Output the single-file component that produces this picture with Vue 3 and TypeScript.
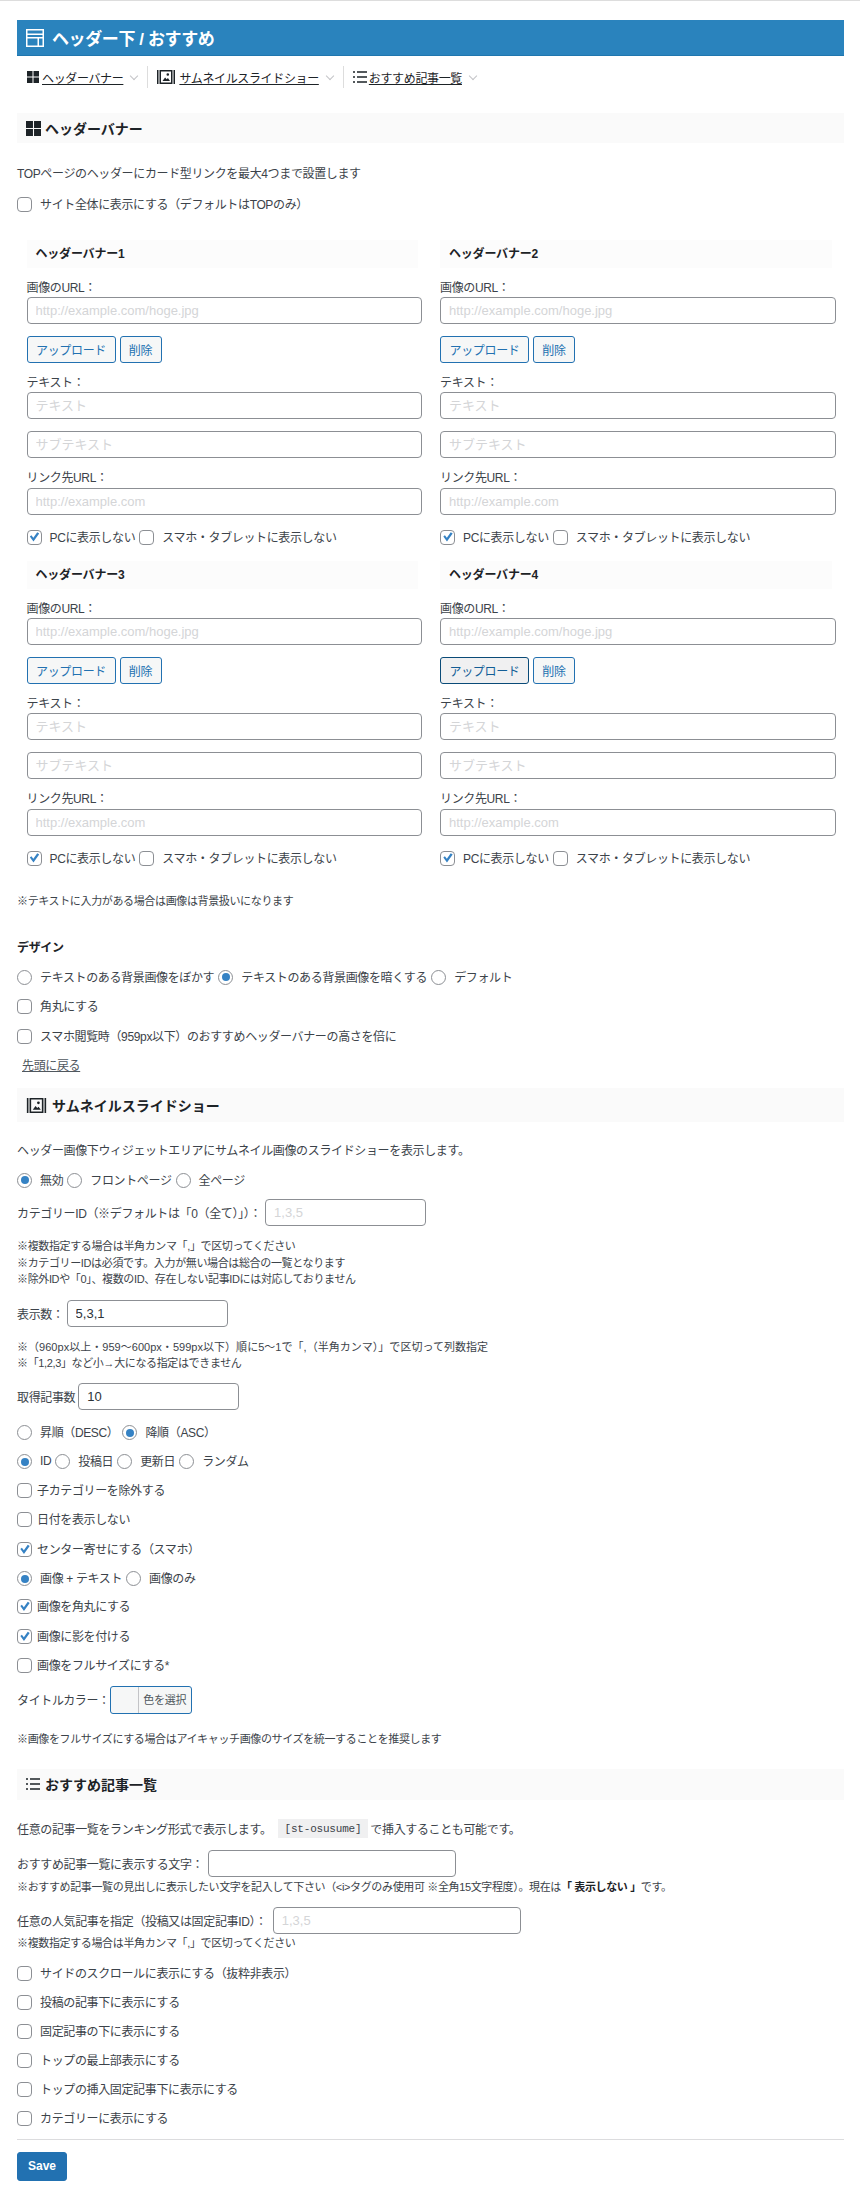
<script setup lang="ts">
interface Banner { name: string; pressed: boolean }
const banners: Banner[] = [
  { name: 'ヘッダーバナー1', pressed: false },
  { name: 'ヘッダーバナー2', pressed: false },
  { name: 'ヘッダーバナー3', pressed: false },
  { name: 'ヘッダーバナー4', pressed: true },
]
const listChecks: string[] = [
  'サイドのスクロールに表示にする（抜粋非表示）',
  '投稿の記事下に表示にする',
  '固定記事の下に表示にする',
  'トップの最上部表示にする',
  'トップの挿入固定記事下に表示にする',
  'カテゴリーに表示にする',
]
</script>

<template>
  <div class="page">
    <h1 class="title">
      <svg class="title-icon" viewBox="0 0 18 20" aria-hidden="true">
        <path fill="#fff" fill-rule="evenodd" d="M0 1h18v18H0zM1.500 2.500v3h15v-3zM1.500 7v2h15V7zM1.500 10.500v7h10v-7zM13 10.500v7h3.500v-7z" />
      </svg>
      ヘッダー下 / おすすめ
    </h1>

    <nav class="nav">
      <div class="nav-item">
        <svg class="ico" viewBox="0 0 14 14"><path fill="#1d2327" d="M1 1h5.500v5.500H1zM7.500 1H13v5.500H7.500zM1 7.500h5.500V13H1zM7.500 7.500H13V13H7.500z" /></svg>
        <a class="nav-link">ヘッダーバナー</a><span class="chev"></span>
      </div>
      <div class="nav-item sep">
        <svg class="ico wide-nav" viewBox="0 0 18 14"><path fill="#1d2327" fill-rule="evenodd" d="M0 0h1.500v14H0zM16.500 0H18v14h-1.500zM2.500 0h13v14h-13zM4 1.500v11h10v-11zM5.500 11l2.600-3.500 1.600 1.800 1.200-1.200L13 11zM10.800 3.200a1.300 1.300 0 1 1 0 2.600 1.300 1.300 0 0 1 0-2.600z" /></svg>
        <a class="nav-link">サムネイルスライドショー</a><span class="chev"></span>
      </div>
      <div class="nav-item sep">
        <svg class="ico" viewBox="0 0 14 14"><path fill="none" stroke="#1d2327" stroke-width="1.400" d="M4 2h10M4 7h10M4 12h10M0 2h2M0 7h2M0 12h2" /></svg>
        <a class="nav-link">おすすめ記事一覧</a><span class="chev"></span>
      </div>
    </nav>

    <h2 class="band m25 h30">
      <svg class="ico band-ico" viewBox="0 0 14 14"><path fill="#1d2327" d="M0 0h6.500v6.500H0zM7.500 0H14v6.500H7.500zM0 7.500h6.500V14H0zM7.500 7.500H14V14H7.500z" /></svg>
      ヘッダーバナー
    </h2>

    <p class="line m19">TOPページのヘッダーにカード型リンクを最大4つまで設置します</p>
    <label class="line m11"><input type="checkbox" class="gap8" />サイト全体に表示にする（デフォルトはTOPのみ）</label>

    <div class="grid">
      <section v-for="b in banners" :key="b.name" class="col">
        <h3 class="sub">{{ b.name }}</h3>
        <div class="label m12">画像のURL：</div>
        <input class="text wide m1" placeholder="http://example.com/hoge.jpg" />
        <div class="btns">
          <button type="button" class="btn upload" :class="{ pressed: b.pressed }">アップロード</button>
          <button type="button" class="btn remove">削除</button>
        </div>
        <div class="label m12">テキスト：</div>
        <input class="text wide m1" placeholder="テキスト" />
        <input class="text wide m12" placeholder="サブテキスト" />
        <div class="label m12">リンク先URL：</div>
        <input class="text wide m2" placeholder="http://example.com" />
        <div class="line m11">
          <input type="checkbox" class="gap8" checked />PCに表示しない<input type="checkbox" class="gap8 ml4" />スマホ・タブレットに表示しない
        </div>
      </section>
    </div>

    <p class="note m26">※テキストに入力がある場合は画像は背景扱いになります</p>
    <p class="line strong m27">デザイン</p>
    <div class="line m10">
      <input type="radio" name="d" class="gap8" />テキストのある背景画像をぼかす<input type="radio" name="d" class="gap8 ml4" checked />テキストのある背景画像を暗くする<input type="radio" name="d" class="gap8 ml4" />デフォルト
    </div>
    <label class="line m9"><input type="checkbox" class="gap8" />角丸にする</label>
    <label class="line m10"><input type="checkbox" class="gap8" />スマホ閲覧時（959px以下）のおすすめヘッダーバナーの高さを倍に</label>
    <a class="line top-link m9">先頭に戻る</a>

    <h2 class="band m14 h34">
      <svg class="ico band-ico wide-ico" viewBox="0 0 18 14"><path fill="#1d2327" fill-rule="evenodd" d="M0 0h1.500v14H0zM16.500 0H18v14h-1.500zM2.500 0h13v14h-13zM4 1.500v11h10v-11zM5.500 11l2.600-3.500 1.600 1.800 1.200-1.200L13 11zM10.800 3.200a1.300 1.300 0 1 1 0 2.600 1.300 1.300 0 0 1 0-2.600z" /></svg>
      サムネイルスライドショー
    </h2>

    <p class="line m17">ヘッダー画像下ウィジェットエリアにサムネイル画像のスライドショーを表示します。</p>
    <div class="line m10">
      <input type="radio" name="s" class="gap8" checked />無効<input type="radio" name="s" class="gap8 ml4" />フロントページ<input type="radio" name="s" class="gap8 ml4" />全ページ
    </div>
    <div class="field m10">カテゴリーID（※デフォルトは「0（全て）」）：<input class="text w160 ml4" placeholder="1,3,5" /></div>
    <p class="note m12 lh165">※複数指定する場合は半角カンマ「,」で区切ってください<br />※カテゴリーIDは必須です。入力が無い場合は総合の一覧となります<br />※除外IDや「0」、複数のID、存在しない記事IDには対応しておりません</p>
    <div class="field m12">表示数：<input class="text w160 ml3" value="5,3,1" /></div>
    <p class="note m12"><span class="loose">※（960px以上・959〜600px・599px以下）順に5〜1で「,（半角カンマ）」で区切って列数指定</span><br />※「1,2,3」など小→大になる指定はできません</p>
    <div class="field m12">取得記事数<input class="text w160 ml3" value="10" /></div>
    <div class="line m12">
      <input type="radio" name="o" class="gap8" />昇順（DESC）<input type="radio" name="o" class="gap8 ml4" checked />降順（ASC）
    </div>
    <div class="line m9">
      <input type="radio" name="k" class="gap8" checked />ID<input type="radio" name="k" class="gap8 ml4" />投稿日<input type="radio" name="k" class="gap8 ml4" />更新日<input type="radio" name="k" class="gap8 ml4" />ランダム
    </div>
    <label class="line m9"><input type="checkbox" class="gap5" />子カテゴリーを除外する</label>
    <label class="line m9"><input type="checkbox" class="gap5" />日付を表示しない</label>
    <label class="line m10"><input type="checkbox" class="gap5" checked />センター寄せにする（スマホ）</label>
    <div class="line m9">
      <input type="radio" name="m" class="gap8" checked />画像 + テキスト<input type="radio" name="m" class="gap8 ml4" />画像のみ
    </div>
    <label class="line m8"><input type="checkbox" class="gap5" checked />画像を角丸にする</label>
    <label class="line m10"><input type="checkbox" class="gap5" checked />画像に影を付ける</label>
    <label class="line m9"><input type="checkbox" class="gap5" />画像をフルサイズにする*</label>
    <div class="field m11">
      タイトルカラー：<button type="button" class="color"><span class="swatch"></span><span class="color-text">色を選択</span></button>
    </div>
    <p class="note m17">※画像をフルサイズにする場合はアイキャッチ画像のサイズを統一することを推奨します</p>

    <h2 class="band m22 h31">
      <svg class="ico band-ico list-ico" viewBox="0 0 14 14"><path fill="none" stroke="#1d2327" stroke-width="1.400" d="M4 2h10M4 7h10M4 12h10M0 2h2M0 7h2M0 12h2" /></svg>
      おすすめ記事一覧
    </h2>

    <p class="line m19">任意の記事一覧をランキング形式で表示します。<code class="code">[st-osusume]</code>で挿入することも可能です。</p>
    <div class="field m11">おすすめ記事一覧に表示する文字：<input class="text w248 ml5" /></div>
    <p class="note m2">※おすすめ記事一覧の見出しに表示したい文字を記入して下さい（&lt;i&gt;タグのみ使用可 ※全角15文字程度）。現在は<b class="em">「 表示しない 」</b>です。</p>
    <div class="field m12">任意の人気記事を指定（投稿又は固定記事ID）：<input class="text w248 ml6" placeholder="1,3,5" /></div>
    <p class="note m1">※複数指定する場合は半角カンマ「,」で区切ってください</p>

    <label v-for="(c, i) in listChecks" :key="c" class="line" :class="i === 0 ? 'm12' : 'm9'"><input type="checkbox" class="gap8" />{{ c }}</label>

    <hr class="rule" />
    <button type="button" class="save">Save</button>
  </div>
</template>

<style>
html, body { margin: 0; background: #fff; }
</style>

<style scoped>
.page {
  box-sizing: border-box;
  width: 860px;
  height: 2201px;
  border-top: 1px solid #ddd;
  padding: 0 16px 0 17px;
  font-family: "Liberation Sans", "Noto Sans CJK JP", sans-serif;
  font-size: 12px;
  letter-spacing: -0.030em;
  color: #3c434a;
}
p, h1, h2, h3 { margin: 0; }
.title {
  margin-top: 19px;
  height: 36px;
  display: flex;
  align-items: center;
  padding-left: 9px;
  background: #2a83bd;
  border-bottom: 1px solid #1f76ae;
  box-sizing: border-box;
  color: #fff;
  font-size: 17px;
  letter-spacing: -0.4px;
  font-weight: 700;
}
.title-icon { width: 18px; height: 20px; margin-right: 8px; }
.nav {
  margin-top: 10px;
  height: 22px;
  display: flex;
  align-items: center;
  padding-left: 9px;
}
.nav-item { display: flex; align-items: center; height: 22px; }
.sep { border-left: 1px solid #ddd; margin-left: 8px; padding-left: 9px; }
.ico { width: 14px; height: 14px; margin-right: 2px; flex: none; }
.wide-nav { width: 18px; margin-right: 4px; }
.nav-link { color: #1d2327; text-decoration: underline; }
.chev {
  width: 5px;
  height: 5px;
  margin: -3px 2px 0 8px;
  border-right: 1px solid #c3c4c7;
  border-bottom: 1px solid #c3c4c7;
  transform: rotate(45deg);
}
.band {
  display: flex;
  align-items: center;
  padding-left: 9px;
  background: #fafafa;
  color: #1d2327;
  font-size: 14px;
  letter-spacing: 0;
  font-weight: 700;
  box-sizing: border-box;
}
.band-ico { width: 15px; height: 15px; margin-right: 4px; }
.wide-ico { width: 21px; height: 15px; margin-right: 5px; }
.list-ico { width: 14px; height: 14px; margin-right: 5px; }
.h30 { height: 30px; }
.h31 { height: 31px; }
.h34 { height: 34px; }
.line {
  display: flex;
  align-items: center;
  min-height: 20px;
  white-space: nowrap;
}
.strong { font-weight: 700; color: #1d2327; }
.top-link { margin-left: 5px; text-decoration: underline; color: #50575e; }
.note { font-size: 11px; line-height: 16px; white-space: nowrap; }
.loose { letter-spacing: 0.030px; }
.lh165 { line-height: 16.500px; }
.grid {
  margin: 27px 0 0 9.500px;
  display: grid;
  grid-template-columns: 395.500px 395.500px;
  column-gap: 18px;
  row-gap: 15px;
}
.col { min-width: 0; }
.sub {
  height: 28px;
  line-height: 28px;
  padding-left: 9px;
  margin-right: 4px;
  background: #fcfcfc;
  color: #1d2327;
  font-size: 12px;
  letter-spacing: -0.2px;
  font-weight: 700;
}
.label { height: 16px; line-height: 16px; }
.text {
  display: block;
  box-sizing: border-box;
  height: 27px;
  padding: 0 8px;
  border: 1px solid #8c8f94;
  border-radius: 4px;
  background: #fff;
  color: #2c3338;
  font: inherit;
  font-size: 13px;
  letter-spacing: 0;
  outline: none;
}
.text::placeholder { color: #d4d5d7; opacity: 1; }
.wide { width: 100%; }
.w160 { width: 161px; flex: none; }
.w248 { width: 248px; flex: none; }
.btns { display: flex; gap: 4px; margin-top: 12px; }
.btn {
  box-sizing: border-box;
  height: 27px;
  padding: 0;
  border: 1px solid #2271b1;
  border-radius: 3px;
  background: #f6f7f7;
  color: #2271b1;
  font: inherit;
  letter-spacing: -0.030em;
}
.upload { width: 89px; }
.remove { width: 42px; }
.pressed { background: #f0f0f1; color: #135e96; border-color: #0a4b78; }
.field { display: flex; align-items: center; white-space: nowrap; min-height: 27px; }
.color {
  display: flex;
  box-sizing: border-box;
  width: 82px;
  height: 28px;
  padding: 0;
  border: 1px solid #2271b1;
  border-radius: 3px;
  background: #f6f7f7;
  color: #50575e;
  font: inherit;
  font-size: 11px;
  letter-spacing: -0.2px;
}
.swatch { width: 27px; height: 100%; border-right: 1px solid #c3c4c7; flex: none; }
.color-text { flex: 1; line-height: 26px; text-align: center; }
.code {
  margin: 0 2px 0 6px;
  padding: 4px 7px 3px;
  background: #f0f0f1;
  font-family: "Liberation Mono", monospace;
  font-size: 11px;
  letter-spacing: -0.2px;
  color: #3c434a;
}
.em { color: #1d2327; }
.rule { margin: 11px 0 0; border: 0; border-top: 1px solid #dcdcde; }
.save {
  display: block;
  margin-top: 12px;
  width: 50px;
  height: 29px;
  padding: 0;
  border: 1px solid #2271b1;
  border-radius: 3px;
  background: #2271b1;
  color: #fff;
  font: inherit;
  font-weight: 700;
  letter-spacing: 0;
}
input[type="checkbox"], input[type="radio"] {
  appearance: none;
  box-sizing: border-box;
  flex: none;
  width: 15px;
  height: 15px;
  margin: 2px 0 0;
  border: 1px solid #8c8f94;
  background: #fff;
  position: relative;
}
input[type="checkbox"] { border-radius: 4px; }
input[type="radio"] { border-radius: 50%; }
input[type="checkbox"]:checked::before {
  content: "";
  position: absolute;
  inset: 0;
  background: #3582c4;
  clip-path: polygon(18% 47%, 30% 36%, 45% 55%, 75% 14%, 90% 24%, 46% 84%);
}
input[type="radio"]:checked::before {
  content: "";
  position: absolute;
  left: 2.500px;
  top: 2.500px;
  width: 8px;
  height: 8px;
  border-radius: 50%;
  background: #3582c4;
}
.line input.gap8 { margin-right: 8px; }
.line input.gap5 { margin-right: 5px; }
.line input.ml4 { margin-left: 4px; }
.ml3 { margin-left: 3px; }
.ml4 { margin-left: 4px; }
.ml5 { margin-left: 5px; }
.ml6 { margin-left: 6px; }
.m1 { margin-top: 1px; }
.m2 { margin-top: 2px; }
.m8 { margin-top: 8px; }
.m9 { margin-top: 9px; }
.m10 { margin-top: 10px; }
.m11 { margin-top: 11px; }
.m12 { margin-top: 12px; }
.m14 { margin-top: 14px; }
.m17 { margin-top: 17px; }
.m19 { margin-top: 19px; }
.m22 { margin-top: 22px; }
.m25 { margin-top: 25px; }
.m26 { margin-top: 26px; }
.m27 { margin-top: 27px; }
</style>
